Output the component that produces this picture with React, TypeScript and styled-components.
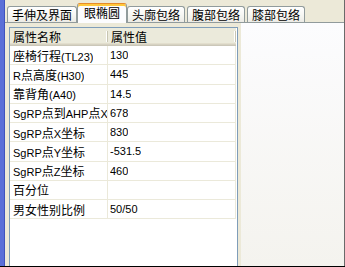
import React from "react";
import styled, { createGlobalStyle } from "styled-components";

const GlobalStyle = createGlobalStyle`
  html, body {
    margin: 0;
    padding: 0;
    background: #ece9d8;
  }
  body {
    font-family: "Liberation Sans", "Noto Sans CJK SC", sans-serif;
    font-size: 11px;
    color: #000;
  }
`;

const TABS = ["手伸及界面", "眼椭圆", "头廓包络", "腹部包络", "膝部包络"];
const ACTIVE_TAB = 1;

const ROWS: [string, string][] = [
  ["座椅行程(TL23)", "130"],
  ["R点高度(H30)", "445"],
  ["靠背角(A40)", "14.5"],
  ["SgRP点到AHP点X向距离", "678"],
  ["SgRP点X坐标", "830"],
  ["SgRP点Y坐标", "-531.5"],
  ["SgRP点Z坐标", "460"],
  ["百分位", ""],
  ["男女性别比例", "50/50"],
];

const NAME_W = 98;
const VALUE_W = 128;

const HAN = /([\u3400-\u9fff]+)/;

const Han = styled.span`
  font-family: "Noto Sans CJK SC", sans-serif;
  font-size: 12px;
`;

// latin runs stay in the small ui font, chinese runs get the 12px cjk face
const mixed = (text: string) =>
  text
    .split(HAN)
    .filter(Boolean)
    .map((part, i) =>
      HAN.test(part) ? <Han key={i}>{part}</Han> : <React.Fragment key={i}>{part}</React.Fragment>,
    );

const Screen = styled.div`
  display: flex;
  width: 345px;
  height: 267px;
  box-sizing: border-box;
  border-bottom: 1px solid #000;
  overflow: hidden;
`;

const SideStrip = styled.div`
  width: 5px;
  flex: none;
  background: linear-gradient(to right, #5a6fd8 0, #5a6fd8 4px, #3f53bd 4px);
`;

const TabControl = styled.div`
  flex: 1;
  min-width: 0;
  display: flex;
  flex-direction: column;
  border-right: 1px solid #6a6a6a;
`;

const TabStrip = styled.div`
  height: 22px;
  flex: none;
  display: flex;
  align-items: flex-end;
  padding-left: 2px;
  box-sizing: border-box;
`;

const Tab = styled.div<{ $active?: boolean }>`
  position: relative;
  z-index: ${(p) => (p.$active ? 1 : 0)};
  box-sizing: border-box;
  height: ${(p) => (p.$active ? "20px" : "16px")};
  margin: 0 ${(p) => (p.$active ? "0" : "2px")} ${(p) => (p.$active ? "-1px" : "0")}
    ${(p) => (p.$active ? "-2px" : "0")};
  padding: 0 ${(p) => (p.$active ? "6px" : "4px")} ${(p) => (p.$active ? "2px" : "0")};
  display: flex;
  align-items: center;
  border: 1px solid #919b9c;
  border-bottom: none;
  border-top-color: ${(p) => (p.$active ? "#e68b2c" : "#919b9c")};
  border-radius: 3px 3px 0 0;
  background: ${(p) =>
    p.$active
      ? "#fcfcfe"
      : "linear-gradient(to bottom, #ffffff 0%, #f7f7f4 50%, #ecebe5 100%)"};
  box-shadow: ${(p) => (p.$active ? "inset 0 2px 0 #ffc83c" : "none")};
  font-family: "Noto Sans CJK SC", sans-serif;
  font-size: 12px;
  line-height: 12px;
  white-space: nowrap;
`;

const TabPage = styled.div`
  flex: 1;
  min-height: 0;
  display: flex;
  border-top: 1px solid #919b9c;
`;

const GridPane = styled.div`
  width: 236px;
  flex: none;
  display: flex;
  flex-direction: column;
  box-sizing: border-box;
  padding: 4px 3px 0 4px;
  background: #ece9d8;
`;

const Grid = styled.div`
  flex: 1;
  background: #fff;
  border: 1px solid #7f9db9;
  border-bottom: none;
  overflow: hidden;
`;

const SidePane = styled.div`
  flex: 1;
  background: linear-gradient(to bottom, #fcfcfe 0%, #f4f3ee 100%);
`;

const HeaderRow = styled.div`
  display: flex;
  height: 18px;
`;

const HeaderCell = styled.div<{ $w: number }>`
  position: relative;
  width: ${(p) => p.$w}px;
  box-sizing: border-box;
  padding: 0 0 2px 3px;
  display: flex;
  align-items: center;
  background: #ebeadb;
  box-shadow: inset 0 -1px 0 #cbc7b8, inset 0 -2px 0 #d6d2c2, inset 0 -3px 0 #e2decd;
  font-family: "Noto Sans CJK SC", sans-serif;
  font-size: 12px;

  &::after {
    content: "";
    position: absolute;
    top: 3px;
    bottom: 4px;
    right: 0;
    width: 1px;
    background: #c7c5b2;
    box-shadow: -1px 0 0 #fff;
  }
`;

const Row = styled.div`
  display: flex;
  height: 19.25px;
`;

const Cell = styled.div<{ $w: number; $pad: number }>`
  width: ${(p) => p.$w}px;
  box-sizing: border-box;
  padding-left: ${(p) => p.$pad}px;
  display: flex;
  align-items: center;
  border-right: 1px solid #ebe9da;
  border-bottom: 1px solid #ebe9da;
  white-space: nowrap;
  overflow: hidden;
`;

const CellText = styled.span`
  display: block;
  min-width: 0;
  overflow: hidden;
  white-space: nowrap;
`;

export default function App() {
  return (
    <>
      <GlobalStyle />
      <Screen>
        <SideStrip />
        <TabControl>
          <TabStrip>
            {TABS.map((t, i) => (
              <Tab key={t} $active={i === ACTIVE_TAB}>
                {t}
              </Tab>
            ))}
          </TabStrip>
          <TabPage>
            <GridPane>
              <Grid>
                <HeaderRow>
                  <HeaderCell $w={NAME_W}>属性名称</HeaderCell>
                  <HeaderCell $w={VALUE_W}>属性值</HeaderCell>
                </HeaderRow>
                {ROWS.map(([name, value]) => (
                  <Row key={name}>
                    <Cell $w={NAME_W} $pad={3}>
                      <CellText>{mixed(name)}</CellText>
                    </Cell>
                    <Cell $w={VALUE_W} $pad={2}>
                      <CellText>{value}</CellText>
                    </Cell>
                  </Row>
                ))}
              </Grid>
            </GridPane>
            <SidePane />
          </TabPage>
        </TabControl>
      </Screen>
    </>
  );
}
